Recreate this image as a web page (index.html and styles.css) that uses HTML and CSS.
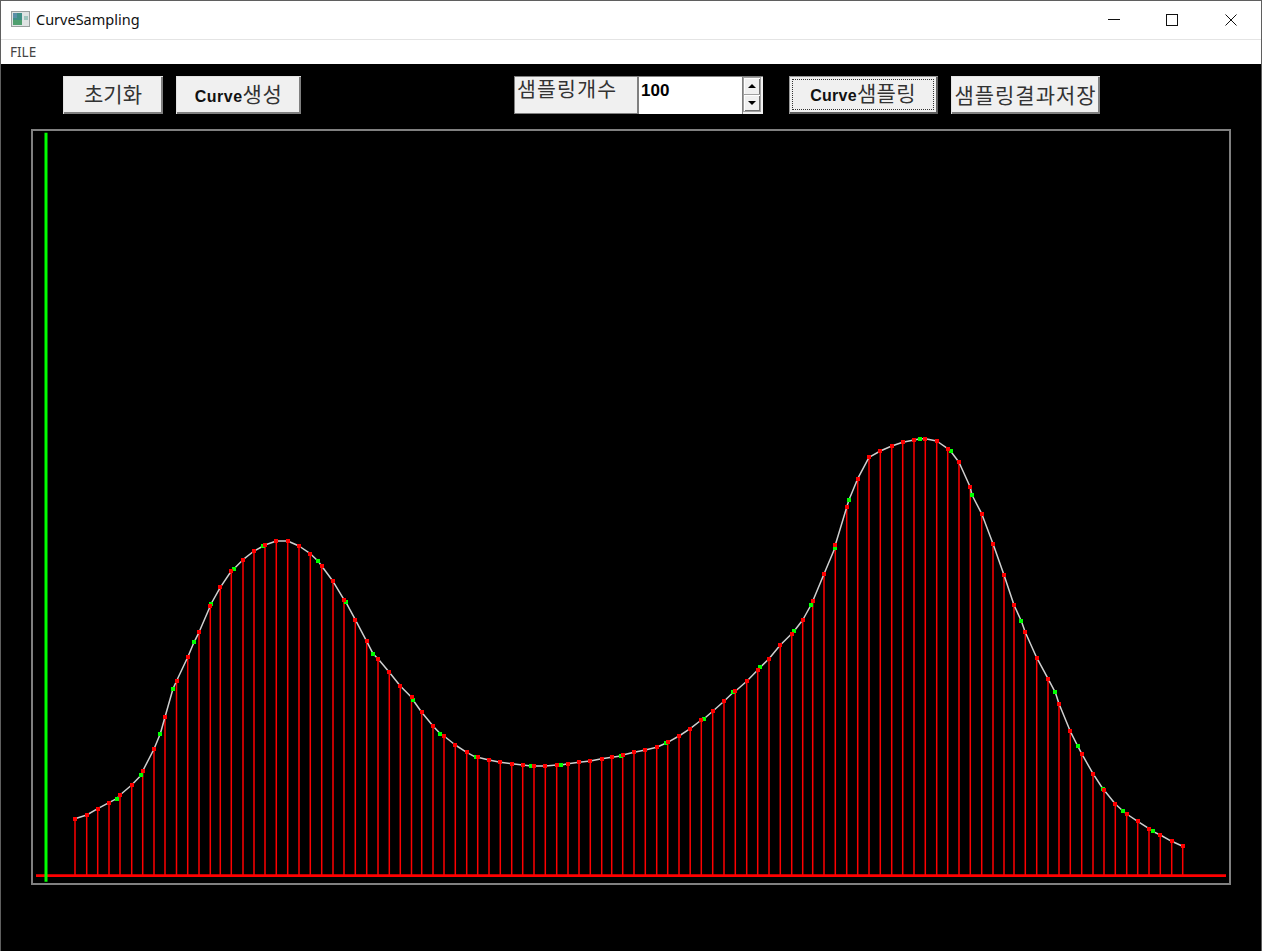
FILE: index.html
```html
<!DOCTYPE html>
<html lang="ko">
<head>
    <meta charset="UTF-8">
    <title>CurveSampling</title>
    <link rel="stylesheet" href="styles.css">
</head>
<body>
    <div class="window">
        <div class="titlebar">
            <svg class="app-icon" width="19" height="16" viewBox="0 0 19 16">
                <rect x="0.5" y="0.5" width="18" height="15" fill="#dfe3e3" stroke="#9a9f9f"/>
                <rect x="2" y="2" width="9" height="12" fill="#3f8f86"/>
                <rect x="2" y="9" width="9" height="5" fill="#4f9f6f"/>
                <rect x="2" y="2" width="4" height="5" fill="#5a8fa8"/>
                <rect x="13" y="5" width="4" height="4" fill="#9fc4bc"/>
            </svg>
            <span class="title">CurveSampling</span>
            <div class="win-controls">
                <div class="win-btn">
                    <svg width="12" height="12" viewBox="0 0 12 12"><path d="M0 5.5H12" stroke="#111" fill="none"/></svg>
                </div>
                <div class="win-btn">
                    <svg width="12" height="12" viewBox="0 0 12 12"><rect x="0.5" y="0.5" width="11" height="11" stroke="#111" fill="none"/></svg>
                </div>
                <div class="win-btn win-close">
                    <svg width="12" height="12" viewBox="0 0 12 12"><path d="M0.5 0.5L11.5 11.5M11.5 0.5L0.5 11.5" stroke="#111" fill="none"/></svg>
                </div>
            </div>
        </div>
        <div class="menubar"><span class="menu-item">FILE</span></div>
        <div class="client">
            <div class="toolbar">
                <button class="btn btn-init">초기화</button>
                <button class="btn btn-create"><span class="latin">Curve</span>생성</button>
                <div class="count-group">
                    <div class="count-label">샘플링개수</div>
                    <div class="count-edit">100</div>
                    <div class="spin">
                        <div class="spin-btn"><span class="arrow-up"></span></div>
                        <div class="spin-btn"><span class="arrow-down"></span></div>
                    </div>
                </div>
                <button class="btn btn-sample"><span class="focus-box"><span class="latin">Curve</span>샘플링</span></button>
                <button class="btn btn-save">샘플링결과저장</button>
            </div>
            <div class="chart">
                <svg id="plot" width="1196" height="752" viewBox="33 131 1196 752"></svg>
            </div>
        </div>
    </div>
    <script src="sampling.js"></script>
</body>
</html>
```

FILE: styles.css
```css
html, body { margin: 0; padding: 0; height: 100%; background: #000; overflow: hidden; }
body { font-family: "Noto Sans CJK KR", "Noto Sans", sans-serif; }
.window { box-sizing: border-box; height: 951px; display: flex; flex-direction: column; border-top: 1px solid #5f5f5f; border-left: 1px solid #5f5f5f; border-right: 1px solid #5f5f5f; }

.titlebar { height: 38px; background: #fff; display: flex; align-items: center; padding-left: 10px; border-bottom: 1px solid #e4e4e4; }
.app-icon { margin: -2px 6px 0 0; }
.title { margin-top: -2px; font-family: "Noto Sans", sans-serif; font-size: 14.5px; color: #111; }
.win-controls { margin-left: auto; display: flex; }
.win-btn { width: 58px; height: 38px; display: flex; align-items: center; justify-content: center; }
.win-close { width: 60px; }

.menubar { height: 24px; background: #fff; display: flex; align-items: center; padding-left: 9px; box-sizing: border-box; }
.menu-item { font-family: "Noto Sans", sans-serif; font-size: 13.5px; color: #444; }

.client { flex: 1; background: #000; }
.toolbar { height: 65px; box-sizing: border-box; padding: 12px 0 0 62px; display: flex; align-items: flex-start; gap: 13px; }

.btn { box-sizing: border-box; height: 38px; padding: 0 0 3px; background: #f0f0f0; color: #333; border: none; font-family: inherit; font-size: 21px; line-height: 1; box-shadow: inset 1px 1px 0 #e3e3e3, inset -2px -2px 0 #7f7f7f; }
.latin { font-family: "Liberation Sans", sans-serif; font-weight: bold; font-size: 16px; color: #111; }
.btn-init { width: 100px; }
.btn-create { width: 125px; letter-spacing: 0.5px; }
.btn-sample { width: 149px; margin-left: 13px; padding: 3px 4px 4px 3px; box-shadow: inset 1px 1px 0 #9a9a9a, inset -2px -2px 0 #5f5f5f; letter-spacing: 0.3px; }
.btn-save { width: 149px; letter-spacing: 1px; padding-bottom: 2px; }
.focus-box { box-sizing: border-box; display: block; height: 100%; line-height: 24px; border: 1px dotted #333; }

.count-group { display: flex; height: 38px; width: 249px; margin-left: 200px; background: #f0f0f0; }
.count-label { box-sizing: border-box; width: 125px; padding: 1px 0 0 2px; border: 1px solid #808080; border-right: 2px solid #808080; font-size: 20.5px; line-height: 20px; letter-spacing: 1.2px; color: #333; }
.count-edit { box-sizing: border-box; width: 103px; background: #fff; padding: 4px 0 0 2px; border-top: 1px solid #808080; font-family: "Liberation Sans", sans-serif; font-weight: bold; font-size: 17px; line-height: 20px; color: #000; }
.spin { width: 21px; box-sizing: border-box; padding: 1px 3px 3px 1px; display: flex; flex-direction: column; border-top: 1px solid #808080; border-left: 1px solid #808080; }
.spin-btn { flex: 1; background: #f0f0f0; display: flex; align-items: center; justify-content: center; box-shadow: inset 1px 1px 0 #fff, inset -1px -1px 0 #6f6f6f, 0 0 0 1px #a0a0a0; }
.arrow-up { width: 0; height: 0; border-left: 4px solid transparent; border-right: 4px solid transparent; border-bottom: 4px solid #000; }
.arrow-down { width: 0; height: 0; border-left: 4px solid transparent; border-right: 4px solid transparent; border-top: 4px solid #000; }

.chart { box-sizing: border-box; width: 1200px; height: 756px; margin-left: 30px; border: 2px solid #808080; background: #000; }
#plot { display: block; }
```

FILE: sampling.js
```js
// sampled points on the curve (x, y)
var samples = [
    [75,818.7],[86.7,815],[97.7,808.7],[109,802.7],[120,795],[131.7,785],[142.7,771],[154,749],[165,717],[176.5,681],
    [187.7,657.3],[199,632.3],[210.3,606],[220.3,587.3],[231.3,571],[243,559.7],[254,551],[265,545],[276.3,541],[287.7,541],
    [299,546],[310.3,553.7],[321.7,566],[333,581.3],[344,599.7],[355.3,619.7],[366.7,641.3],[378,658.7],[389.3,672.3],[400.3,686],
    [411.5,697.3],[421.7,712.3],[433,726],[444,736],[455.3,745],[466.7,752.3],[477.7,757.3],[489,760],[500.3,762.3],[511.7,763.7],
    [522.7,765],[534,766],[545.3,766],[556.7,765],[568,763.7],[579,762.3],[590.3,761],[601.7,758.7],[611.7,757.3],[622.7,755],
    [634,752.3],[645.3,750],[656.7,747.3],[667.7,742.3],[679,736],[690.2,728.7],[701.3,720],[712.7,711.3],[724,701.3],[735.3,691.3],
    [746.7,681.3],[757.7,670],[769,658.7],[780.3,645],[791.7,633.7],[802.7,620],[812.7,601.3],[824,574],[835.3,545],[846.7,507.3],
    [857.7,478.7],[869,457.3],[880.3,451],[891.7,446],[902.7,442.3],[914,440],[925.3,438.7],[936.7,441],[947.7,448.7],[959,462.3],
    [970.3,487.3],[981.7,513.7],[993,543.7],[1004,575],[1014,605],[1025.3,632.3],[1036.7,657.7],[1048,678.7],[1059,703.7],[1070.3,731.3],
    [1081.7,753.7],[1093,773.7],[1104,790],[1115.3,804],[1126.7,814],[1137.7,821.3],[1149,828.7],[1160.3,835],[1171.7,841.3],[1182.7,846.3]
];

// control points picked by the user
var controls = [
    [116.7,798.7],[141.3,775],[160.3,733.7],[173,688.7],[194,642.3],[211,604],[234,568.7],[263.3,546],[318,561],[346,602.3],
    [373,653.7],[413,700],[440.3,733.7],[476,757.3],[531.3,766],[561.3,765],[621,756],[666.3,743],[704,718.7],[733.3,692.3],
    [760.3,667.3],[794,631.3],[811,605],[835,547.7],[849,499.7],[920.3,438.7],[950.5,451],[972,495],[1021.3,621],[1055.3,692.3],
    [1077.7,746],[1103,789],[1123,811],[1152.7,831.3]
];

var AXIS_Y = 875.7;
var plot = document.getElementById('plot');

function add(tag, attrs) {
    var el = document.createElementNS('http://www.w3.org/2000/svg', tag);
    for (var k in attrs) el.setAttribute(k, attrs[k]);
    plot.appendChild(el);
}

function marker(p, color) {
    add('rect', { x: Math.round(p[0] - 2), y: Math.round(p[1] - 2), width: 4, height: 4, fill: color });
}

// stems
samples.forEach(function(p) {
    add('line', { x1: p[0], y1: p[1], x2: p[0], y2: AXIS_Y, stroke: '#f00', 'stroke-width': 1.5 });
});

// curve through every point
var all = samples.concat(controls).sort(function(a, b) { return a[0] - b[0]; });
add('polyline', {
    points: all.map(function(p) { return p.join(','); }).join(' '),
    fill: 'none', stroke: '#cfcfcf', 'stroke-width': 1.5, 'stroke-linejoin': 'round'
});

controls.forEach(function(p) { marker(p, '#0f0'); });
samples.forEach(function(p) { marker(p, '#f00'); });

// axes
add('line', { x1: 36, y1: AXIS_Y, x2: 1226, y2: AXIS_Y, stroke: '#f00', 'stroke-width': 2.8 });
add('line', { x1: 46, y1: 132.7, x2: 46, y2: 881.7, stroke: '#0f0', 'stroke-width': 3 });
```
